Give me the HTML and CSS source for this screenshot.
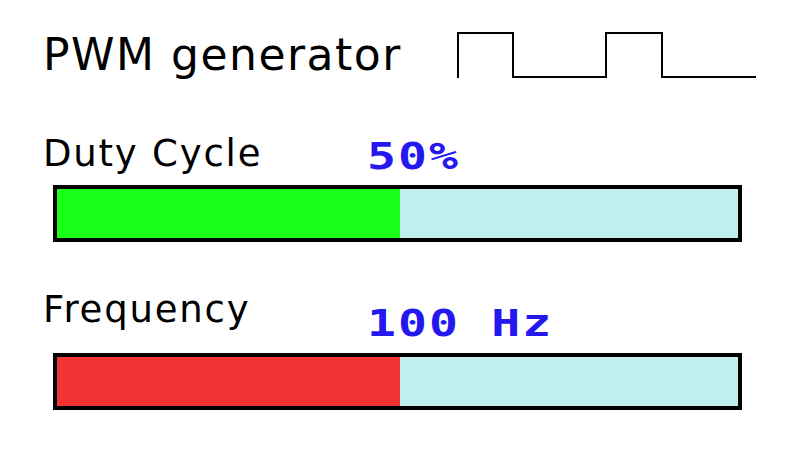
FILE: index.html
```html
<!DOCTYPE html>
<html>
<head>
  <title>PWM generator</title>
  <link rel="stylesheet" href="styles.css">
</head>
<body>
  <div class="screen">
    <div class="header">
      <h1 class="title">PWM generator</h1>
      <svg class="wave" width="300" height="47" viewBox="0 0 300 47">
        <path d="M1 46 V1 H56 V45 H149 V1 H205 V45 H299" fill="none" stroke="#000" stroke-width="2"/>
      </svg>
    </div>

    <div class="row duty-row">
      <span class="label">Duty Cycle</span>
      <span class="value">50%</span>
    </div>
    <div class="bar">
      <div class="fill fill-duty" style="width: 50.4%"></div>
    </div>

    <div class="row freq-row">
      <span class="label">Frequency</span>
      <span class="value value-low">100 Hz</span>
    </div>
    <div class="bar">
      <div class="fill fill-freq" style="width: 50.4%"></div>
    </div>
  </div>
</body>
</html>
```

FILE: styles.css
```css
body {
  margin: 0;
  background-color: #fff;
  font-family: "DejaVu Sans", Verdana, sans-serif;
  color: #000;
}

.screen {
  padding: 32px 30px 0 43px;
}

.header {
  display: flex;
  align-items: flex-start;
  justify-content: space-between;
}

.title {
  margin: 1px 0 0 0;
  font-size: 44px;
  line-height: 44px;
  font-weight: normal;
  letter-spacing: 1.5px;
}

.wave {
  display: block;
}

.row {
  display: flex;
  align-items: flex-start;
}

.duty-row {
  margin-top: 56px;
  height: 50px;
}

.freq-row {
  margin-top: 49px;
  height: 62px;
}

.label {
  width: 324px;
  font-size: 37px;
  line-height: 37px;
  letter-spacing: 1.8px;
}

/* blocky lcd-style digits: widened mono bold */
.value {
  display: inline-block;
  margin-top: 3px;
  font-family: "DejaVu Sans Mono", "Liberation Mono", monospace;
  font-weight: bold;
  font-size: 37px;
  line-height: 37px;
  letter-spacing: 1.6px;
  color: #2418ef;
  white-space: pre;
  transform: scaleX(1.3);
  transform-origin: left top;
}

.value-low {
  margin-top: 14px;
}

.bar {
  margin-left: 10px;
  width: 689px;
  height: 57px;
  box-sizing: border-box;
  border: 4px solid #000;
  background-color: #c1efef;
}

.fill {
  height: 100%;
}

.fill-duty {
  background-color: #19ff19;
}

.fill-freq {
  background-color: #f23333;
}
```
